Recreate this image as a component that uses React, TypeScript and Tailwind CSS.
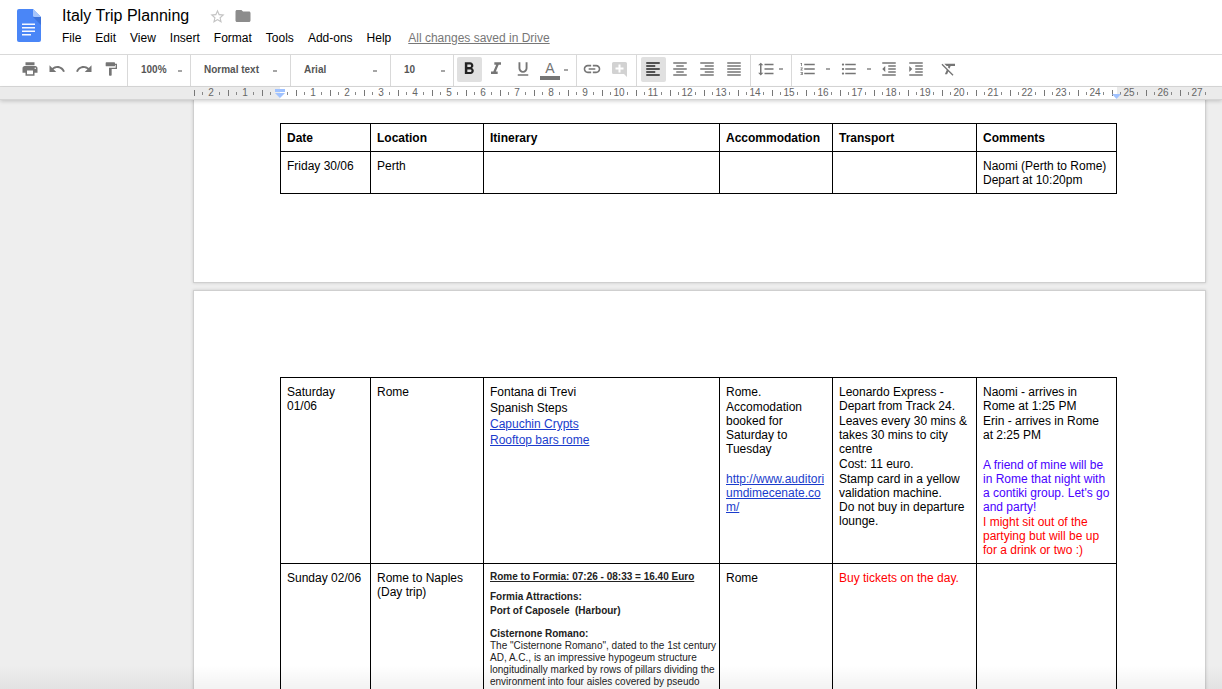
import React from 'react';
import {
  MdPrint, MdUndo, MdRedo, MdFormatPaint, MdFormatBold, MdFormatItalic, MdFormatUnderlined, MdLink,
  MdFormatAlignLeft, MdFormatAlignCenter, MdFormatAlignRight, MdFormatAlignJustify, MdFormatLineSpacing,
  MdFormatListNumbered, MdFormatListBulleted, MdFormatIndentDecrease, MdFormatIndentIncrease,
  MdFormatClear, MdStarBorder, MdFolder,
} from 'react-icons/md';

const menus = ['File', 'Edit', 'View', 'Insert', 'Format', 'Tools', 'Add-ons', 'Help'];
const rulerMarks = Array.from({ length: 30 }, (_, i) => i - 2);

const DocsLogo: React.FC = () => (
  <svg width="24" height="33" viewBox="0 0 24 33" aria-hidden="true">
    <path d="M2 0h14l8 8v23a2 2 0 0 1-2 2H2a2 2 0 0 1-2-2V2a2 2 0 0 1 2-2z" fill="#4a86f7" />
    <path d="M16 8h8v8z" fill="#3d73db" />
    <path d="M16 0l8 8h-6.500a1.500 1.500 0 0 1-1.500-1.500z" fill="#a6c5fb" />
    <path d="M5 14.500h13v1.500H5zM5 18h13v1.500H5zM5 21.500h13v1.500H5zM5 25h9v1.500H5z" fill="#f5f8ff" />
  </svg>
);

const Dash: React.FC = () => <span className="w-1 h-0.5 bg-[#a5a5a5]" />;

interface ToolProps {
  label: string;
  active?: boolean;
  children: React.ReactNode;
}

const Tool: React.FC<ToolProps> = ({ label, active, children }) => (
  <button
    type="button"
    aria-label={label}
    className={`w-[25px] h-[25px] pr-px pb-px flex items-center justify-center rounded-xs ${active ? 'bg-[#e0e0e0] text-[#222]' : 'text-[#757575]'}`}
  >
    {children}
  </button>
);

// Icon button with a drop-down dash next to the icon
const MenuTool: React.FC<ToolProps & { className: string }> = ({ label, className, children }) => (
  <button type="button" aria-label={label} className={`w-9 h-[25px] pb-px flex items-center text-[#757575] ${className}`}>
    {children}
    <Dash />
  </button>
);

const Group: React.FC<{ className: string; children: React.ReactNode }> = ({ className, children }) => (
  <div className={`h-full shrink-0 pb-0.5 flex items-center gap-0.5 border-r border-[#d9d9d9] ${className}`}>{children}</div>
);

const ToolSelect: React.FC<{ label: string; value: string; className: string; dash: string }> = ({ label, value, className, dash }) => (
  <div className={`h-full shrink-0 pb-0.5 flex items-center relative border-r border-[#d9d9d9] ${className}`}>
    <select aria-label={label} className="appearance-none w-full h-full pl-[13px] text-[10px] font-bold text-[#555] bg-transparent">
      <option>{value}</option>
    </select>
    <span className={`absolute top-[15px] w-1 h-0.5 bg-[#a5a5a5] ${dash}`} />
  </div>
);

const Header: React.FC = () => (
  <header className="h-[54px] shrink-0 flex pl-[17px] bg-white">
    <div className="pt-[9px]">
      <DocsLogo />
    </div>
    <div className="pl-[14px] pt-1">
      <div className="flex items-center h-6 pl-[7px]">
        <h1 className="text-[16px] leading-6">Italy Trip Planning</h1>
        <button type="button" aria-label="Star" className="ml-5 text-[#c4c4c4]">
          <MdStarBorder size={17} />
        </button>
        <button type="button" aria-label="Move to folder" className="ml-2 text-[#8c8c8c]">
          <MdFolder size={18} />
        </button>
      </div>
      <nav className="flex items-center h-5 text-[12px] leading-5">
        {menus.map((menu) => (
          <button key={menu} type="button" className="px-[7px]">{menu}</button>
        ))}
        <a href="#history" className="ml-2.5 text-[#777] underline">All changes saved in Drive</a>
      </nav>
    </div>
  </header>
);

const Toolbar: React.FC = () => (
  <div role="toolbar" className="h-[33px] shrink-0 flex items-center bg-white border-y border-[#d9d9d9]">
    <Group className="pl-[18px] pr-[3px]">
      <Tool label="Print"><MdPrint size={18} /></Tool>
      <Tool label="Undo"><MdUndo size={18} /></Tool>
      <Tool label="Redo"><MdRedo size={18} /></Tool>
      <Tool label="Paint format"><MdFormatPaint size={16} /></Tool>
    </Group>
    <ToolSelect label="Zoom" value="100%" className="w-[63px]" dash="right-2" />
    <ToolSelect label="Styles" value="Normal text" className="w-[100px]" dash="right-[13px]" />
    <ToolSelect label="Font" value="Arial" className="w-[100px]" dash="right-[13px]" />
    <ToolSelect label="Font size" value="10" className="w-[63px]" dash="right-2" />
    <Group className="pl-[3px] pr-0.5">
      <Tool label="Bold" active><MdFormatBold size={20} /></Tool>
      <Tool label="Italic"><MdFormatItalic size={20} /></Tool>
      <Tool label="Underline"><MdFormatUnderlined size={18} /></Tool>
      <button type="button" aria-label="Text color" className="w-9 h-[25px] pl-0.5 flex items-center gap-1 text-[#757575]">
        <span className="w-5 flex flex-col items-center">
          <span className="text-[14px] leading-4">A</span>
          <span className="w-5 h-1 bg-[#757575]" />
        </span>
        <Dash />
      </button>
    </Group>
    <Group className="pl-[3px] pr-1">
      <Tool label="Insert link"><MdLink size={20} /></Tool>
      <Tool label="Add a comment">
        <svg width="15" height="15" viewBox="0 0 15 15" aria-hidden="true">
          <path d="M1.500 0h12A1.500 1.500 0 0 1 15 1.500V15l-3-3H1.500A1.500 1.500 0 0 1 0 10.500v-9A1.500 1.500 0 0 1 1.500 0z" fill="#d2d2d2" />
          <path d="M6.500 2.500h2v3h3v2h-3v3h-2v-3h-3v-2h3z" fill="#fff" />
        </svg>
      </Tool>
    </Group>
    <Group className="pl-1 pr-[3px]">
      <Tool label="Left align" active><MdFormatAlignLeft size={18} /></Tool>
      <Tool label="Center align"><MdFormatAlignCenter size={18} /></Tool>
      <Tool label="Right align"><MdFormatAlignRight size={18} /></Tool>
      <Tool label="Justify"><MdFormatAlignJustify size={18} /></Tool>
    </Group>
    <Group className="pl-[3px] pr-px">
      <MenuTool label="Line spacing" className="pl-[3px] gap-1"><MdFormatLineSpacing size={18} /></MenuTool>
    </Group>
    <div className="h-full shrink-0 flex items-center gap-[5px] pl-[3px] pb-0.5">
      <MenuTool label="Numbered list" className="pl-1 gap-[9px]"><MdFormatListNumbered size={18} /></MenuTool>
      <MenuTool label="Bulleted list" className="pl-1 gap-[9px]"><MdFormatListBulleted size={18} /></MenuTool>
      <div className="flex gap-0.5">
        <Tool label="Decrease indent"><MdFormatIndentDecrease size={18} /></Tool>
        <Tool label="Increase indent"><MdFormatIndentIncrease size={18} /></Tool>
      </div>
      <div className="pl-[3px]">
        <Tool label="Clear formatting"><MdFormatClear size={18} /></Tool>
      </div>
    </div>
  </div>
);

const Ruler: React.FC = () => (
  <div className="relative z-10 h-[12px] shrink-0 bg-[#ebebeb] shadow-[0_1px_0_#d5d5d5,0_2px_4px_rgba(0,0,0,0.2)]">
    <div className="absolute inset-y-0 left-[280px] right-[105px] bg-white" />
    <div className="relative h-full flex items-center pl-[194px] overflow-hidden text-[10px] leading-[12px] text-[#666]">
      {rulerMarks.map((n) => (
        <div key={n} className="w-[34px] shrink-0 flex items-center">
          <span className="w-px h-1.5 bg-[#777]" />
          <span className="w-px h-[3px] ml-[7px] bg-[#888]" />
          <span className="w-4 text-center">{n === 0 ? '' : Math.abs(n)}</span>
          <span className="w-px h-[3px] bg-[#888]" />
        </div>
      ))}
    </div>
    <svg className="absolute left-[275px] top-[2px]" width="10" height="9" viewBox="0 0 10 9" aria-hidden="true">
      <path d="M0 0h10v3H0zM0 4h10L5 9z" fill="#a0c2ff" />
    </svg>
    <svg className="absolute right-[101px] top-[7px]" width="9" height="5" viewBox="0 0 9 5" aria-hidden="true">
      <path d="M0 0h9L4.500 5z" fill="#a0c2ff" />
    </svg>
  </div>
);

const Columns: React.FC = () => (
  <colgroup>
    <col className="w-[90px]" />
    <col className="w-[113px]" />
    <col className="w-[236px]" />
    <col className="w-[113px]" />
    <col className="w-[144px]" />
    <col />
  </colgroup>
);

const Cell: React.FC<{ children?: React.ReactNode }> = ({ children }) => (
  <td className="border border-black pt-[7px] pb-1.5 px-1.5 align-top">
    <div className="flex flex-col gap-px">{children}</div>
  </td>
);

const Page: React.FC<{ className: string; children: React.ReactNode }> = ({ className, children }) => (
  <section className={`ml-[193px] mr-4 pl-[86px] pr-[88px] bg-white border border-[#cfcfcf] shadow-[0_0_3px_rgba(0,0,0,0.15)] ${className}`}>
    {children}
  </section>
);

const tableClass = 'w-full table-fixed border-collapse text-[12px] leading-[14px] text-black';
const linkClass = 'text-[#1a3ccc] underline';

export default function App() {
  return (
    <div className="h-screen flex flex-col overflow-hidden bg-[#eee] text-black font-['Liberation_Sans',Arial,sans-serif]">
      <Header />
      <Toolbar />
      <Ruler />
      <main className="relative flex-1 min-h-0 overflow-hidden">
        <Page className="border-t-0 pt-6 pb-[88px]">
          <table className={tableClass}>
            <Columns />
            <thead>
              <tr className="text-left">
                {['Date', 'Location', 'Itinerary', 'Accommodation', 'Transport', 'Comments'].map((title) => (
                  <th key={title} className="border border-black pt-[7px] pb-1.5 px-1.5 font-bold">{title}</th>
                ))}
              </tr>
            </thead>
            <tbody>
              <tr>
                <Cell>Friday 30/06</Cell>
                <Cell>Perth</Cell>
                <Cell />
                <Cell />
                <Cell />
                <Cell><p>Naomi (Perth to Rome)<br />Depart at 10:20pm</p></Cell>
              </tr>
            </tbody>
          </table>
        </Page>

        <Page className="mt-[7px] pt-[86px] pb-20">
          <table className={tableClass}>
            <Columns />
            <tbody>
              <tr>
                <Cell><p>Saturday<br />01/06</p></Cell>
                <Cell>Rome</Cell>
                <Cell>
                  <ul className="flex flex-col gap-0.5">
                    <li>Fontana di Trevi</li>
                    <li>Spanish Steps</li>
                    <li><a href="#capuchin-crypts" className={linkClass}>Capuchin Crypts</a></li>
                    <li><a href="#rooftop-bars" className={linkClass}>Rooftop bars rome</a></li>
                  </ul>
                </Cell>
                <Cell>
                  <p>Rome.</p>
                  <p>Accomodation booked for Saturday to Tuesday</p>
                  <p>&nbsp;</p>
                  <a href="#auditorium" className={`${linkClass} break-all`}>http://www.auditoriumdimecenate.com/</a>
                </Cell>
                <Cell>
                  <p>Leonardo Express - Depart from Track 24.</p>
                  <p>Leaves every 30 mins &amp; takes 30 mins to city centre</p>
                  <p>Cost: 11 euro.</p>
                  <p>Stamp card in a yellow validation machine.<br />Do not buy in departure lounge.</p>
                </Cell>
                <Cell>
                  <p>Naomi - arrives in Rome at 1:25 PM</p>
                  <p>Erin - arrives in Rome at 2:25 PM</p>
                  <p>&nbsp;</p>
                  <p className="text-[#4a00ff]">A friend of mine will be in Rome that night with a contiki group. Let's go and party!</p>
                  <p className="text-[#f00]">I might sit out of the partying but will be up for a drink or two :)</p>
                </Cell>
              </tr>
              <tr>
                <Cell>Sunday 02/06</Cell>
                <Cell><p>Rome to Naples<br />(Day trip)</p></Cell>
                <Cell>
                  <div className="pb-10 text-[10px] leading-[12px] text-[#222] whitespace-nowrap">
                    <p className="font-bold underline">Rome to Formia: 07:26 - 08:33 = 16.40 Euro</p>
                    <p className="mt-[7px] font-bold leading-[14px]">Formia Attractions:<br />Port of Caposele&nbsp; (Harbour)</p>
                    <p className="mt-2.5 font-bold">Cisternone Romano:</p>
                    <p>
                      The "Cisternone Romano", dated to the 1st century<br />
                      AD, A.C., is an impressive hypogeum structure<br />
                      longitudinally marked by rows of pillars dividing the<br />
                      environment into four aisles covered by pseudo
                    </p>
                  </div>
                </Cell>
                <Cell>Rome</Cell>
                <Cell><p className="text-[#f00]">Buy tickets on the day.</p></Cell>
                <Cell />
              </tr>
            </tbody>
          </table>
        </Page>
        <div className="absolute inset-x-0 bottom-0 h-6 pointer-events-none bg-linear-to-t from-black/5 to-transparent" />
      </main>
    </div>
  );
}
